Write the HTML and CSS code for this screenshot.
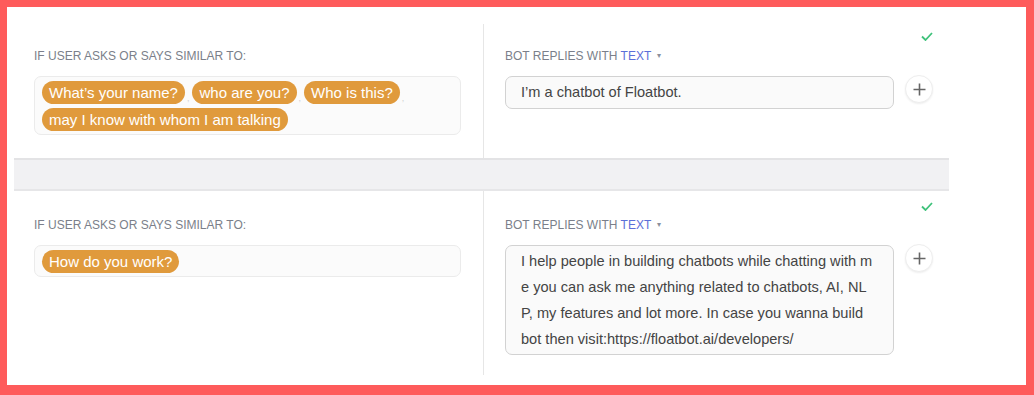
FILE: index.html
```html
<!DOCTYPE html>
<html lang="en">

<head>
    <meta charset="UTF-8">
    <meta name="viewport" content="width=device-width, initial-scale=1.0">
    <title>Floatbot FAQ</title>
    <link rel="stylesheet" href="styles.css">
</head>

<body>
    <div class="frame">
        <div class="faq-list">
            <div class="faq first">
                <div class="ask">
                    <div class="label">If user asks or says similar to:</div>
                    <div class="tags">
                        <span class="tag">What’s your name?</span><span class="sep">,</span>
                        <span class="tag">who are you?</span><span class="sep">,</span>
                        <span class="tag">Who is this?</span><span class="sep">,</span>
                        <span class="tag">may I know with whom I am talking</span>
                    </div>
                </div>
                <div class="reply">
                    <div class="status">
                        <svg width="12" height="9" viewBox="0 0 12 9"><polyline points="1,4.5 4.5,8 11,1" fill="none" stroke="#3fc27b" stroke-width="1.8"/></svg>
                    </div>
                    <div class="label">Bot replies with <span class="type">Text</span> <span class="caret">▾</span></div>
                    <div class="reply-row">
                        <div class="answer">I’m a chatbot of Floatbot.</div>
                        <button class="add">
                            <svg width="13" height="13" viewBox="0 0 13 13"><path d="M6.5 0.5v12M0.5 6.5h12" stroke="#666" stroke-width="1.6"/></svg>
                        </button>
                    </div>
                </div>
            </div>

            <div class="divider"></div>

            <div class="faq second">
                <div class="ask">
                    <div class="label">If user asks or says similar to:</div>
                    <div class="tags">
                        <span class="tag">How do you work?</span>
                    </div>
                </div>
                <div class="reply">
                    <div class="status">
                        <svg width="12" height="9" viewBox="0 0 12 9"><polyline points="1,4.5 4.5,8 11,1" fill="none" stroke="#3fc27b" stroke-width="1.8"/></svg>
                    </div>
                    <div class="label">Bot replies with <span class="type">Text</span> <span class="caret">▾</span></div>
                    <div class="reply-row">
                        <div class="answer long">I help people in building chatbots while chatting with me you can ask me anything related to chatbots, AI, NLP, my features and lot more. In case you wanna build bot then visit:https://floatbot.ai/developers/</div>
                        <button class="add">
                            <svg width="13" height="13" viewBox="0 0 13 13"><path d="M6.5 0.5v12M0.5 6.5h12" stroke="#666" stroke-width="1.6"/></svg>
                        </button>
                    </div>
                </div>
            </div>
        </div>
    </div>
</body>

</html>
```

FILE: styles.css
```css
body {
    margin: 0;
    font-family: "Liberation Sans", Arial, sans-serif;
}

.frame {
    width: 1034px;
    height: 395px;
    box-sizing: border-box;
    border: 7px solid #fe5b5b;
    border-bottom-width: 10px;
    border-right-width: 8px;
    background: #fff;
}

.faq-list {
    width: 935px;
    margin-left: 7px;
    padding-top: 17px;
}

.faq {
    display: grid;
    grid-template-columns: 469px 1fr;
}

.ask {
    padding: 25px 22px 23px 20px;
}

.second .ask {
    padding-top: 27px;
}

.reply {
    border-left: 1px solid #e6e6e6;
    padding: 8px 16px 0 21px;
}

.second .reply {
    padding-top: 11px;
    padding-bottom: 20px;
}

.status {
    display: flex;
    justify-content: flex-end;
    height: 9px;
}

.second .reply .label {
    margin-top: 7px;
}

.reply .label {
    margin-top: 8px;
}

.label {
    font-size: 12px;
    line-height: 14px;
    color: #7b7f8a;
    text-transform: uppercase;
}

.type {
    color: #5b6fd8;
}

.caret {
    font-size: 8px;
    color: #8a8f9c;
    margin-left: 3px;
    vertical-align: 2px;
}

.tags {
    margin-top: 13px;
    border: 1px solid #ebebeb;
    border-radius: 7px;
    background: #fbfbfb;
    padding: 4px 7px 3px;
    display: flex;
    flex-wrap: wrap;
    align-items: flex-end;
    row-gap: 4px;
}

.tag {
    display: inline-block;
    height: 23px;
    line-height: 23px;
    padding: 0 7px;
    border-radius: 12px;
    background: #e09a3c;
    color: #fff;
    font-size: 15px;
    white-space: nowrap;
}

.sep {
    font-size: 9px;
    color: #cfcfcf;
    margin: 0 3px 0 2px;
    line-height: 12px;
}

.reply-row {
    display: flex;
    align-items: flex-start;
    gap: 11px;
    margin-top: 13px;
}

.answer {
    width: 389px;
    box-sizing: border-box;
    border: 1px solid #d2d2d2;
    border-radius: 7px;
    background: #fafafa;
    padding: 0 15px;
    height: 33px;
    line-height: 31px;
    font-size: 14.6px;
    color: #444;
}

.answer.long {
    height: 110px;
    padding: 2px 19px 2px 15px;
    line-height: 26px;
    word-break: break-all;
}

.add {
    width: 28px;
    height: 28px;
    margin-top: -1px;
    padding: 0;
    border: 1px solid #eeeeee;
    border-radius: 50%;
    background: #fff;
    box-shadow: 0 1px 2px rgba(0, 0, 0, 0.07);
    display: flex;
    align-items: center;
    justify-content: center;
}

.divider {
    height: 29px;
    background: #f1f1f3;
    border-top: 2px solid #e3e3e5;
    border-bottom: 2px solid #e6e6e8;
}
```
